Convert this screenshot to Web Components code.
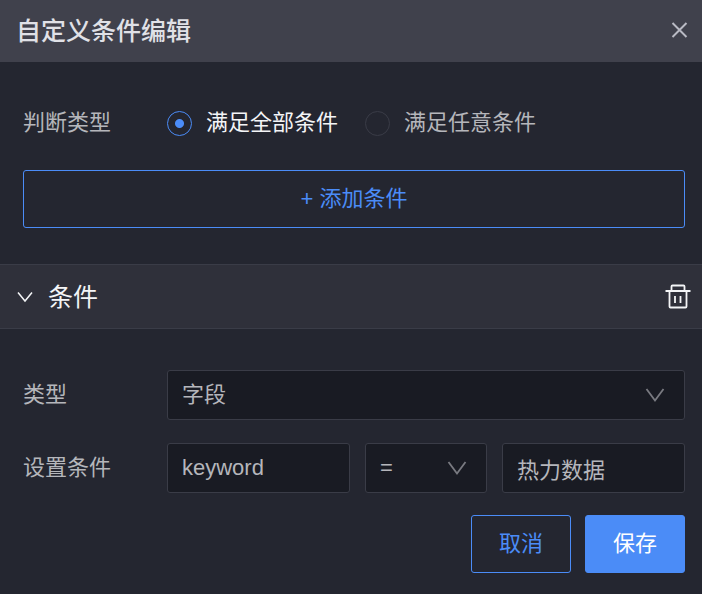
<!DOCTYPE html>
<html lang="zh-CN">
<head>
<meta charset="UTF-8">
<meta name="viewport" content="width=device-width, initial-scale=1">
<title>自定义条件编辑</title>
<style>
  :root {
    --bg: #242630;
    --bg-header: #40414c;
    --bg-section: #2f303a;
    --bg-input: #191b23;
    --line: #3a3c47;
    --primary: #4b8cf7;
    --text: #b5b6bb;
    --text-strong: #f4f5f7;
    --size: 22px;
    --size-title: 25px;
  }

  body {
    margin: 0;
    background: var(--bg);
    color: var(--text);
    font: var(--size)/30px "Liberation Sans", "Noto Sans CJK SC", sans-serif;
  }
</style>
</head>
<body>
<condition-dialog>
  <dialog-header slot="header">自定义条件编辑</dialog-header>
  <match-type label="判断类型"></match-type>
  <ui-button variant="outline" block>+ 添加条件</ui-button>
  <condition-panel slot="panel">条件</condition-panel>
  <ui-button slot="footer" variant="outline">取消</ui-button>
  <ui-button slot="footer" variant="primary">保存</ui-button>
</condition-dialog>

<script>
class ConditionDialog extends HTMLElement {
  constructor() {
    super();
    this.attachShadow({ mode: "open" });
    this.shadowRoot.innerHTML = `
      <style>
        :host {
          display: block;
        }

        .main {
          display: grid;
          gap: 32px;
          padding: 46px 17px 36px 23px;
        }

        footer {
          display: flex;
          justify-content: flex-end;
          gap: 14px;
          padding: 22px 17px 21px 23px;
        }
      </style>

      <slot name="header"></slot>
      <div class="main"><slot></slot></div>
      <slot name="panel"></slot>
      <footer><slot name="footer"></slot></footer>
    `;
  }
}

class DialogHeader extends HTMLElement {
  constructor() {
    super();
    this.attachShadow({ mode: "open" });
    this.shadowRoot.innerHTML = `
      <style>
        :host {
          display: flex;
          align-items: center;
          justify-content: space-between;
          height: 62px;
          padding: 0 14px 0 16px;
          background: var(--bg-header);
        }

        h1 {
          margin: 0;
          color: #e0e1e7;
          font-size: var(--size-title);
          font-weight: 500;
        }

        button {
          display: flex;
          padding: 0;
          border: 0;
          background: none;
          color: #b9bac4;
          cursor: pointer;
        }
      </style>

      <h1><slot></slot></h1>
      <button type="button" aria-label="关闭">
        <svg width="18" height="18" viewBox="0 0 18 18" fill="none" stroke="currentColor" stroke-width="2">
          <path d="M2.500 1l14 14M16.500 1l-14 14"/>
        </svg>
      </button>
    `;
    this.shadowRoot.querySelector("button").addEventListener("click", () => {
      this.dispatchEvent(new CustomEvent("close", { bubbles: true }));
    });
  }
}

class MatchType extends HTMLElement {
  constructor() {
    super();
    this.attachShadow({ mode: "open" });
    this.shadowRoot.innerHTML = `
      <style>
        :host {
          display: block;
        }

        .group {
          display: grid;
          grid-template-columns: 144px 1fr;
          align-items: center;
        }

        .options {
          display: flex;
          gap: 27px;
        }

        label {
          display: flex;
          align-items: center;
          gap: 14px;
          cursor: pointer;
        }

        label:has(:checked) {
          color: var(--text-strong);
        }

        input {
          appearance: none;
          box-sizing: border-box;
          width: 25px;
          height: 25px;
          margin: 0;
          border: 1px solid var(--line);
          border-radius: 50%;
        }

        input:checked {
          border-color: var(--primary);
          background: radial-gradient(circle, var(--primary) 4px, transparent 5px);
        }
      </style>

      <div class="group" role="radiogroup" aria-labelledby="caption">
        <span id="caption"></span>
        <div class="options">
          <label><input type="radio" name="match" value="all" checked>满足全部条件</label>
          <label><input type="radio" name="match" value="any">满足任意条件</label>
        </div>
      </div>
    `;
    this.shadowRoot.querySelector("#caption").textContent = this.getAttribute("label");
  }
}

class UiButton extends HTMLElement {
  constructor() {
    super();
    this.attachShadow({ mode: "open" });
    this.shadowRoot.innerHTML = `
      <style>
        :host {
          display: inline-block;
        }

        :host([block]) {
          display: block;
        }

        button {
          width: 100%;
          height: 58px;
          padding: 0 27px;
          border: 1px solid var(--primary);
          border-radius: 3px;
          background: transparent;
          color: var(--primary);
          font: inherit;
          cursor: pointer;
        }

        :host([variant="primary"]) button {
          background: var(--primary);
          color: #fff;
        }
      </style>

      <button type="button"><slot></slot></button>
    `;
  }
}

class ConditionPanel extends HTMLElement {
  constructor() {
    super();
    this.attachShadow({ mode: "open" });
    this.shadowRoot.innerHTML = `
      <style>
        :host {
          display: block;
        }

        header {
          display: flex;
          align-items: center;
          justify-content: space-between;
          box-sizing: border-box;
          height: 65px;
          padding: 0 11px 0 17px;
          border: solid var(--line);
          border-width: 1px 0;
          background: var(--bg-section);
        }

        h2 {
          margin: 0;
          font-size: var(--size-title);
          font-weight: 400;
        }

        button {
          display: flex;
          align-items: center;
          gap: 15px;
          padding: 0;
          border: 0;
          background: none;
          color: var(--text-strong);
          font: inherit;
          cursor: pointer;
        }

        .body {
          display: grid;
          grid-template-columns: 144px 1fr;
          align-items: center;
          row-gap: 23px;
          padding: 41px 17px 0 23px;
        }

        .body[hidden] {
          display: none;
        }

        .fields {
          display: grid;
          grid-template-columns: 3fr 2fr 3fr;
          gap: 15px;
        }

        input,
        select {
          appearance: none;
          box-sizing: border-box;
          width: 100%;
          min-width: 0;
          height: 50px;
          padding: 0 14px;
          border: 1px solid var(--line);
          border-radius: 3px;
          background: var(--bg-input);
          color: var(--text);
          font: inherit;
        }

        .select {
          display: grid;
          align-items: center;
        }

        .select > * {
          grid-area: 1 / 1;
        }

        .select svg {
          justify-self: end;
          margin-right: 20px;
          color: #797a81;
          pointer-events: none;
        }
      </style>

      <header>
        <h2>
          <button type="button" class="toggle" aria-expanded="true">
            <svg width="16" height="12" viewBox="0 0 16 12" fill="none" stroke="currentColor" stroke-width="1.5">
              <path d="M1 1.5l7 8.5 7-8.5"/>
            </svg>
            <slot></slot>
          </button>
        </h2>
        <button type="button" aria-label="删除">
          <svg width="26" height="26" viewBox="0 0 26 26" fill="none" stroke="currentColor" stroke-width="1.8">
            <path d="M.5 7h25M6.500 6.500V2.500q0-1 1-1h11q1 0 1 1v4M4.500 7v15.500q0 1 1 1h15q1 0 1-1V7M10 12v7M15.500 12v7"/>
          </svg>
        </button>
      </header>

      <div class="body">
        <label for="type">类型</label>
        <div class="select">
          <select id="type"><option>字段</option></select>
          <svg width="20" height="16" viewBox="0 0 20 16" fill="none" stroke="currentColor" stroke-width="1.8">
            <path d="M1.500 2L10 13.500 18.500 2"/>
          </svg>
        </div>
        <label for="field">设置条件</label>
        <div class="fields">
          <input id="field" type="text" value="keyword">
          <div class="select">
            <select aria-label="运算符"><option>=</option></select>
            <svg width="20" height="16" viewBox="0 0 20 16" fill="none" stroke="currentColor" stroke-width="1.8">
              <path d="M1.500 2L10 13.500 18.500 2"/>
            </svg>
          </div>
          <input type="text" aria-label="值" value="热力数据">
        </div>
      </div>
    `;

    this.toggle = this.shadowRoot.querySelector(".toggle");
    this.body = this.shadowRoot.querySelector(".body");
    this.toggle.addEventListener("click", () => {
      this.body.hidden = !this.body.hidden;
      this.toggle.setAttribute("aria-expanded", String(!this.body.hidden));
    });
  }
}

customElements.define("condition-dialog", ConditionDialog);
customElements.define("dialog-header", DialogHeader);
customElements.define("match-type", MatchType);
customElements.define("ui-button", UiButton);
customElements.define("condition-panel", ConditionPanel);
</script>
</body>
</html>
